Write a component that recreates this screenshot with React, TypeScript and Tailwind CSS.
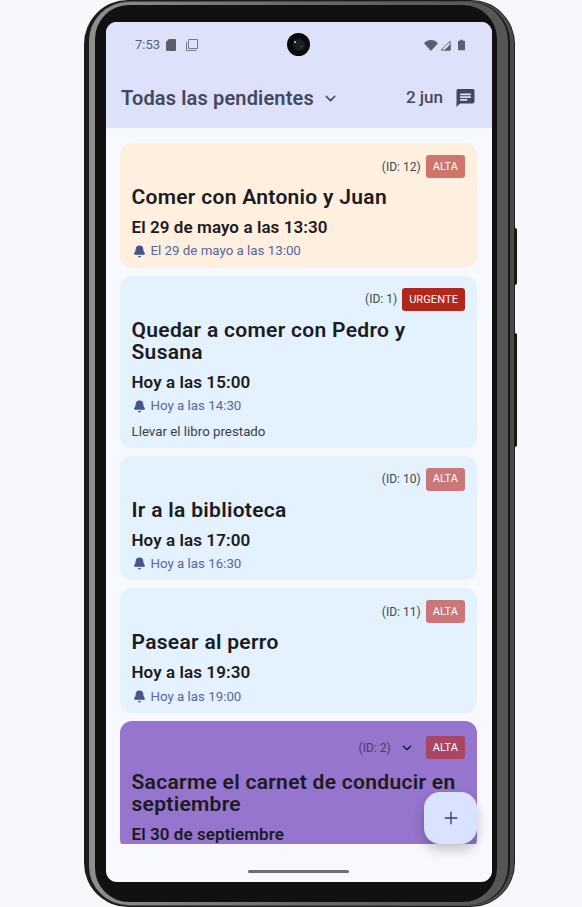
import { Bell, ChevronDown, Plus } from 'lucide-react';

type Task = {
  id: number;
  badge: string;
  badgeColor: string;
  title: string;
  date: string;
  alarm?: string;
  note?: string;
  cardColor: string;
  expand?: boolean;
};

const tasks: Task[] = [
  { id: 12, badge: 'ALTA', badgeColor: 'bg-[#d0756b]', title: 'Comer con Antonio y Juan', date: 'El 29 de mayo a las 13:30', alarm: 'El 29 de mayo a las 13:00', cardColor: 'bg-[#ffefdf]' },
  { id: 1, badge: 'URGENTE', badgeColor: 'bg-[#b3261e]', title: 'Quedar a comer con Pedro y Susana', date: 'Hoy a las 15:00', alarm: 'Hoy a las 14:30', note: 'Llevar el libro prestado', cardColor: 'bg-[#e3f2fd]' },
  { id: 10, badge: 'ALTA', badgeColor: 'bg-[#cb7678]', title: 'Ir a la biblioteca', date: 'Hoy a las 17:00', alarm: 'Hoy a las 16:30', cardColor: 'bg-[#e3f2fd]' },
  { id: 11, badge: 'ALTA', badgeColor: 'bg-[#cb7678]', title: 'Pasear al perro', date: 'Hoy a las 19:30', alarm: 'Hoy a las 19:00', cardColor: 'bg-[#e3f2fd]' },
  { id: 2, badge: 'ALTA', badgeColor: 'bg-[#a84663]', title: 'Sacarme el carnet de conducir en septiembre', date: 'El 30 de septiembre', cardColor: 'bg-[#9575cd]', expand: true },
];

function TaskCard({ task }: { task: Task }) {
  return (
    <div className={`${task.cardColor} ${task.expand ? 'pt-[15px]' : 'pt-3'} shrink-0 rounded-xl pr-3 pb-[6px] pl-[11.5px] text-[#1b1b21]`}>
      <div className="flex h-[23px] items-center justify-end">
        <span className={`text-[12px] ${task.expand ? 'text-[#4a3d66]' : 'text-[#45464f]'}`}>(ID: {task.id})</span>
        {task.expand && <ChevronDown size={14} strokeWidth={2.4} className="ml-[9px] mr-[7px] text-[#1b1b21]" />}
        <span className={`${task.badgeColor} ml-[5px] flex h-[23px] items-center rounded-[3px] px-[7px] pt-[1px] text-[11px] font-normal tracking-[0.1px] text-white`}>
          {task.badge}
        </span>
      </div>
      <div className={`${task.expand ? 'mt-[12px]' : 'mt-[8px]'} text-[21px] leading-[22px] font-semibold tracking-[0.3px]`}>{task.title}</div>
      <div className="mt-[8px] text-[17px] leading-[22px] font-semibold tracking-[0.08px]">{task.date}</div>
      {task.alarm && (
        <div className="mt-[3px] flex h-[20.75px] items-center text-[13.3px] text-[#5466a3]">
          <Bell size={13} fill="currentColor" className="mr-[5px] ml-[1px] text-[#44568f]" />
          {task.alarm}
        </div>
      )}
      {task.note && <div className="mt-[4px] h-[21px] text-[13.3px] leading-[21px] text-[#3c3d45]">{task.note}</div>}
    </div>
  );
}

function StatusIcons() {
  return (
    <div className="flex items-center gap-[2px] text-[#5c5f6b]">
      <svg width="14" height="11" viewBox="0 0 14 11" fill="currentColor">
        <path d="M0 3.2C2 1.2 4.400 0 7 0s5 1.200 7 3.200L7 11z" />
      </svg>
      <svg width="11" height="11" viewBox="0 0 12 12" fill="none" stroke="currentColor">
        <path d="M11 1.200V11H1.200z" />
        <path d="M11 5.500V11H5.500z" fill="currentColor" />
      </svg>
      <svg width="7" height="12" viewBox="0 0 8 12" fill="currentColor" className="ml-[5px]">
        <path d="M2.500 0h3v1H7a1 1 0 0 1 1 1v9a1 1 0 0 1-1 1H1a1 1 0 0 1-1-1V2a1 1 0 0 1 1-1h1.500z" />
      </svg>
    </div>
  );
}

export default function App() {
  return (
    <div className="relative h-[907px] w-[582px] overflow-hidden bg-[#f7f8fb] font-['Roboto',sans-serif]">
      {/* botones laterales */}
      <div className="absolute top-[228px] left-[513px] h-[57px] w-[4px] rounded-r-[2px] bg-[#161616]" />
      <div className="absolute top-[333px] left-[513px] h-[114px] w-[4px] rounded-r-[2px] bg-[#161616]" />

      {/* marco del movil, capas redondeadas */}
      <div className="relative ml-[84px] h-[907px] w-[431px] rounded-[44px] bg-[#1c1c1c] pt-[1px] pr-[1px] pb-[1px] pl-[4px]">
        <div className="h-full rounded-[42px] bg-[#4a4a4a] pt-[1px] pr-[4px] pb-[1px]">
          <div className="h-full rounded-[40px] bg-[#161616] pr-[2px] pl-[1px]">
            <div className="h-full rounded-[39px] bg-gradient-to-r from-[#8f8f8f] via-[#6a6a6a] to-[#555555] pt-[3px] pr-[11px] pb-[3px] pl-[6px]">
              <div className="h-full rounded-[34px] bg-[#111111] pt-[17px] pr-[5px] pl-[11px]">
                {/* pantalla */}
                <div className="relative flex h-[860px] w-[386px] flex-col overflow-hidden rounded-[11px] bg-[#f8f8ff]">
                  <div className="h-[106px] shrink-0 bg-[#dde1f9]">
                    <div className="flex h-[46px] items-center justify-between pr-[27px] pl-[29px]">
                      <div className="flex items-center text-[13px] text-[#5c5f6b]">
                        7:53
                        <svg width="10" height="12" viewBox="0 0 10 12" fill="currentColor" className="ml-[6px]">
                          <path d="M3 0h6a1 1 0 0 1 1 1v10a1 1 0 0 1-1 1H1a1 1 0 0 1-1-1V3z" />
                        </svg>
                        <svg width="12" height="12" viewBox="0 0 12 12" fill="none" stroke="currentColor" strokeWidth="0.8" className="ml-[10px]">
                          <path d="M2.500 0.500h9v9h-9z" />
                          <path d="M0.500 3v8.500h10" />
                        </svg>
                      </div>
                      <StatusIcons />
                    </div>
                    <div className="mt-[9px] flex h-[42px] items-center justify-between pr-[17px] pl-[15px] text-[#44485e]">
                      <div className="flex items-center text-[20px] font-semibold tracking-[0.15px]">
                        Todas las pendientes
                        <ChevronDown size={17} strokeWidth={2} className="ml-[8px]" />
                      </div>
                      <div className="flex items-center text-[17px] font-medium">
                        2 jun
                        <svg width="19" height="18" viewBox="0 0 20 20" fill="currentColor" className="ml-[13px]">
                          <path d="M2 0h16a2 2 0 0 1 2 2v12a2 2 0 0 1-2 2H4l-4 4V2a2 2 0 0 1 2-2z" />
                          <path d="M4 5h12v2H4zM4 8h12v2H4zM4 11h8v2H4z" fill="#dde1f9" />
                        </svg>
                      </div>
                    </div>
                  </div>

                  <div className="mt-[15px] mr-[15px] ml-[14px] flex h-[701px] flex-col gap-2 overflow-hidden">
                    {tasks.map((task) => (
                      <TaskCard key={task.id} task={task} />
                    ))}
                  </div>

                  {/* boton flotante */}
                  <button className="absolute top-[770px] left-[318px] flex h-[52px] w-[53px] items-center justify-center rounded-2xl bg-[#d9e2ff] text-[#2f4070] shadow-[0_6px_12px_rgba(0,0,0,0.22)]">
                    <Plus size={20} strokeWidth={1.6} />
                  </button>

                  <div className="absolute bottom-[9px] left-[142px] h-[3px] w-[101px] rounded-full bg-[#6e6e6e]" />

                  {/* camara */}
                  <div className="absolute top-[11px] left-[181px] flex h-[23px] w-[23px] items-center justify-center rounded-full bg-[#0a0a0c]">
                    <div className="h-[12px] w-[12px] rounded-full bg-[#1b2026]" />
                    <div className="absolute top-[8px] left-[7px] h-[2px] w-[2px] rounded-full bg-[#c8d8d0]" />
                    <div className="absolute top-[13px] left-[14px] h-[1px] w-[1px] rounded-full bg-[#6f9fe0]" />
                  </div>
                </div>
              </div>
            </div>
          </div>
        </div>
      </div>
    </div>
  );
}
